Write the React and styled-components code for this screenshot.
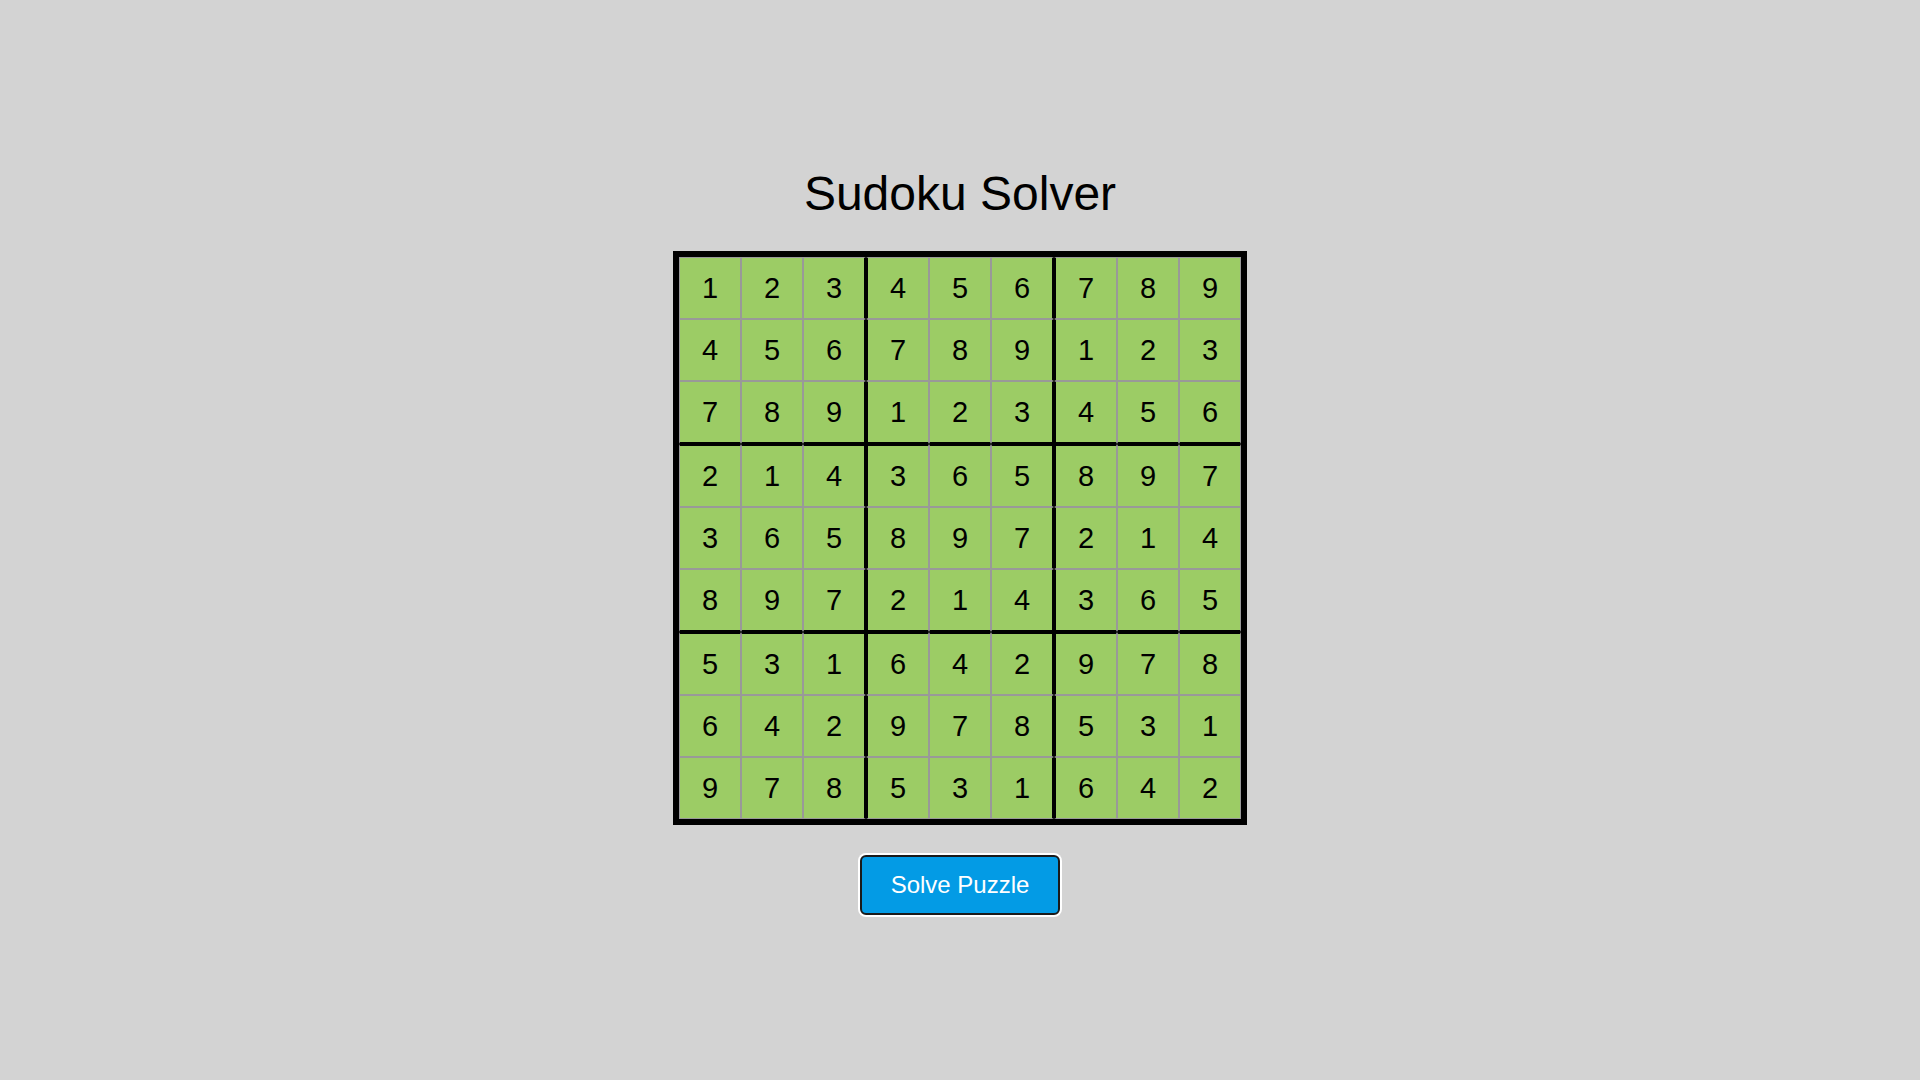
import React from 'react';
import styled, { createGlobalStyle } from 'styled-components';

const GlobalStyle = createGlobalStyle`
  body {
    margin: 0;
    background: #d3d3d3;
    font-family: "Liberation Sans", Arial, sans-serif;
  }
`

const Page = styled.div`
  min-height: 100vh;
  display: flex;
  flex-direction: column;
  align-items: center;
  padding-top: 166px;
  box-sizing: border-box;
`

const Title = styled.h1`
  margin: 0 0 30px;
  font-size: 48px;
  font-weight: normal;
  color: #000;
`

const Board = styled.div`
  display: grid;
  grid-template-columns: repeat(9, auto);
  border: 6px solid #000;
`

const thin = '1px solid #999';
const thick = '2px solid #000';

const Cell = styled.div`
  width: 60px;
  height: 60px;
  display: flex;
  align-items: center;
  justify-content: center;
  background: #9ccc65;
  font-size: 29px;
  color: #000;
  border-left: ${p => (p.$col % 3 === 0 && p.$col !== 0 ? thick : thin)};
  border-right: ${p => (p.$col % 3 === 2 && p.$col !== 8 ? thick : thin)};
  border-top: ${p => (p.$row % 3 === 0 && p.$row !== 0 ? thick : thin)};
  border-bottom: ${p => (p.$row % 3 === 2 && p.$row !== 8 ? thick : thin)};
`

const SolveButton = styled.button`
  margin-top: 30px;
  width: 200px;
  height: 60px;
  box-sizing: border-box;
  border: 2px solid #1a1a1a;
  border-radius: 6px;
  box-shadow: 0 0 0 2px #fff;
  background: #039be5;
  color: #fff;
  font-family: "Liberation Sans", Arial, sans-serif;
  font-size: 24px;
  cursor: pointer;
`

const grid = [
  [1, 2, 3, 4, 5, 6, 7, 8, 9],
  [4, 5, 6, 7, 8, 9, 1, 2, 3],
  [7, 8, 9, 1, 2, 3, 4, 5, 6],
  [2, 1, 4, 3, 6, 5, 8, 9, 7],
  [3, 6, 5, 8, 9, 7, 2, 1, 4],
  [8, 9, 7, 2, 1, 4, 3, 6, 5],
  [5, 3, 1, 6, 4, 2, 9, 7, 8],
  [6, 4, 2, 9, 7, 8, 5, 3, 1],
  [9, 7, 8, 5, 3, 1, 6, 4, 2],
];

const App = () => {
  return (
    <Page>
      <GlobalStyle />
      <Title>Sudoku Solver</Title>
      <Board>
        {grid.map((row, r) =>
          row.map((n, c) => (
            <Cell key={r + '-' + c} $row={r} $col={c}>
              {n}
            </Cell>
          ))
        )}
      </Board>
      <SolveButton>Solve Puzzle</SolveButton>
    </Page>
  )
}

export default App;
